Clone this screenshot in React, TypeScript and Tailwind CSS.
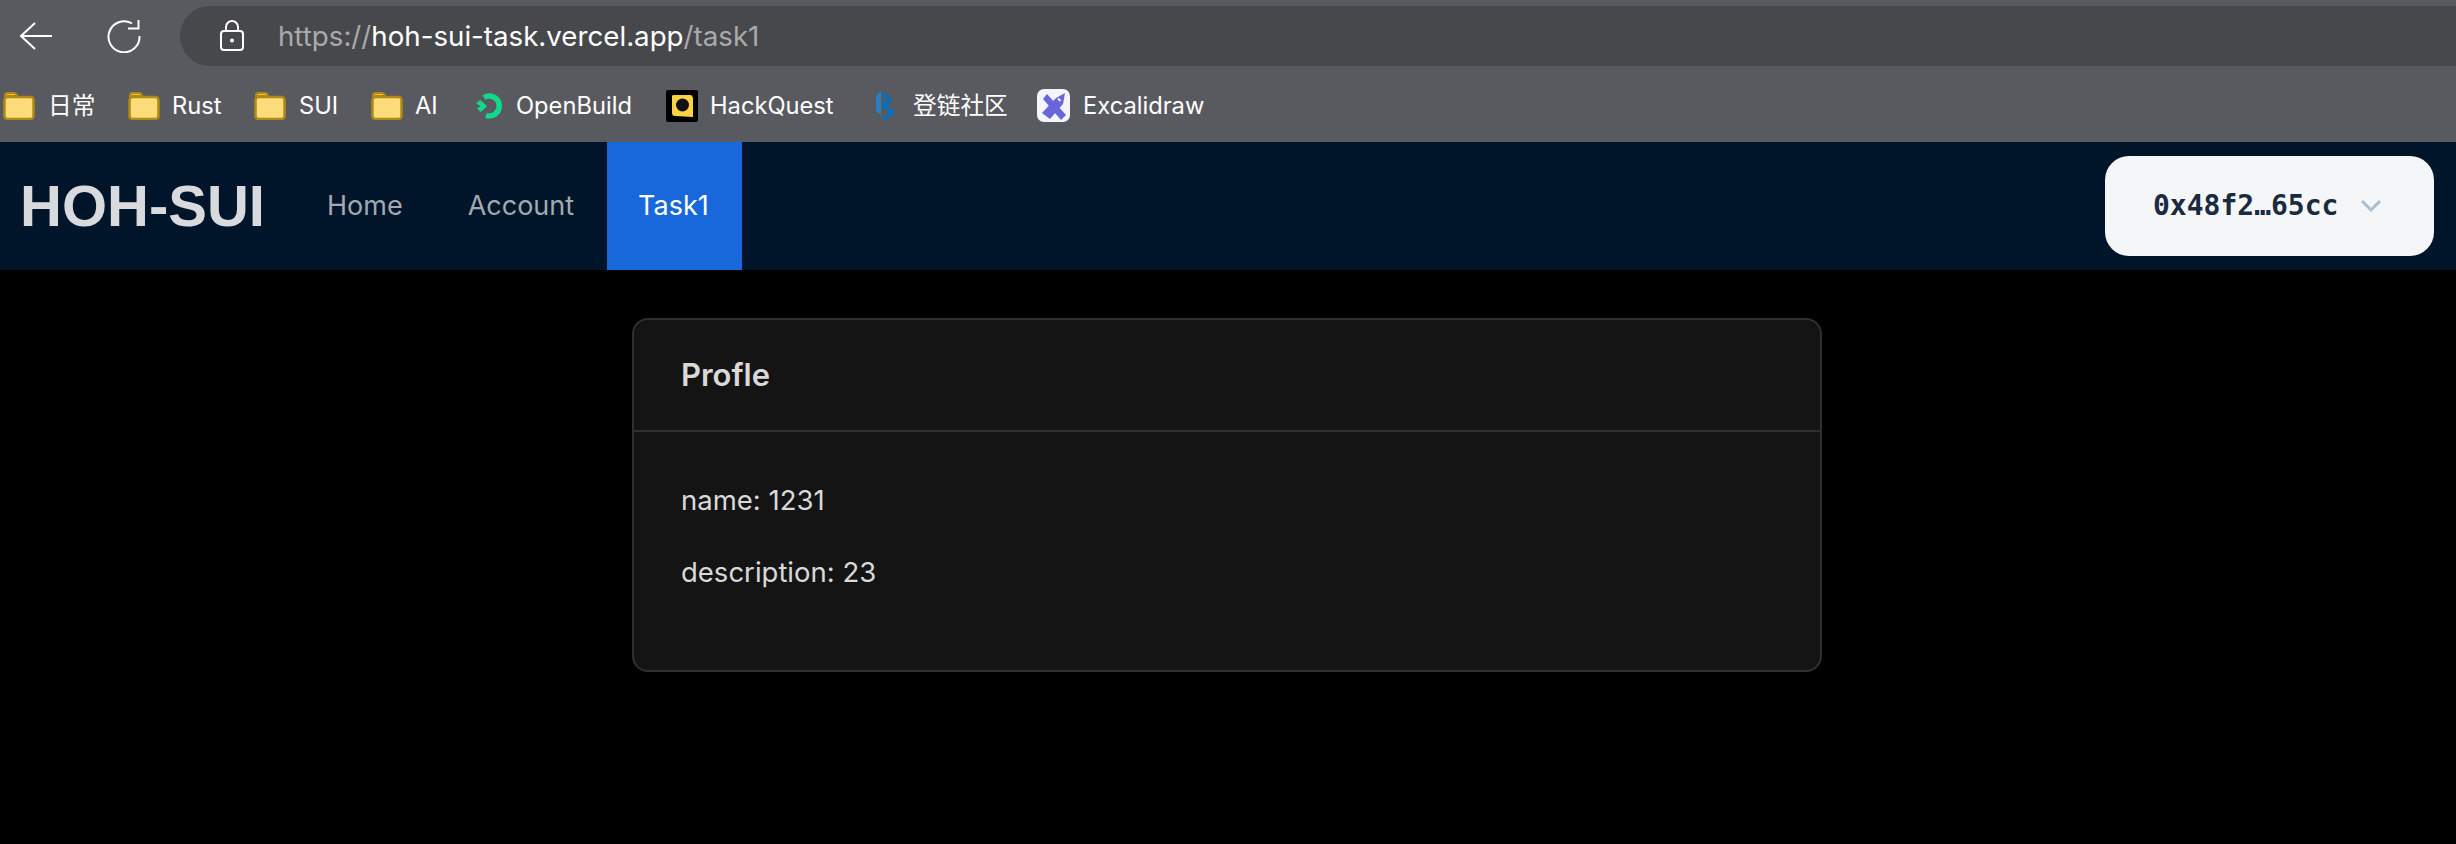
import React from "react";

const FolderIcon = () => (
  <svg width="32" height="28" viewBox="0 0 32 28" className="shrink-0">
    <path d="M2 6V3.500C2 2 3 1 4.500 1H11C12.500 1 13.500 2 14 4H4C3 4 2 5 2 6Z" fill="#f5c63c" stroke="#b08a14" strokeWidth="2" />
    <rect x="1.500" y="5" width="29" height="22" rx="3" fill="#fddc7c" stroke="#b08a14" strokeWidth="2.500" />
  </svg>
);

const OpenBuildIcon = () => (
  <svg width="28" height="28" viewBox="0 0 28 28" className="shrink-0">
    <path d="M9 5.500A10 10 0 1 1 11 23.500" fill="none" stroke="#12d98a" strokeWidth="5.500" />
    <path d="M1 11.500L5 8L7 9.500L12 14L6 20L2 16.500L5.500 14Z" fill="#12d98a" />
  </svg>
);

const HackQuestIcon = () => (
  <svg width="32" height="32" viewBox="0 0 32 32" className="shrink-0">
    <rect width="32" height="32" rx="2" fill="#000" />
    <path d="M7 5H24C26 5 27 7 27 9V27L9 26C7 26 6 25 6 23V6Z" fill="#fbd244" />
    <circle cx="16.500" cy="15" r="6.500" fill="#111" />
  </svg>
);

const DengLianIcon = () => (
  <svg width="22" height="32" viewBox="0 0 22 32" className="shrink-0">
    <path d="M2 6L7 1V25L2 21Z" fill="#2a7fc4" />
    <path d="M8 1L17 8V13L13 16L20 20V24L10 31L8 28L14 23V21L8 17V13L12 11V9L8 6Z" fill="#0f6db8" />
  </svg>
);

const ExcalidrawIcon = () => (
  <svg width="33" height="33" viewBox="0 0 33 33" className="shrink-0">
    <rect width="33" height="33" rx="7" fill="#f4f5fb" />
    <path d="M6 10L10 5L29 26L24 31Z" fill="#6965db" />
    <path d="M28 4L26 15L13 30L5 24L19 9Z" fill="#6965db" />
    <path d="M21 9.500L23.500 12" stroke="#f4f5fb" strokeWidth="2" />
  </svg>
);

const bookmarks = [
  { icon: <FolderIcon />, label: "日常", gap: "gap-[13px]", w: "w-[125px]" },
  { icon: <FolderIcon />, label: "Rust", gap: "gap-[12px]", w: "w-[126px]" },
  { icon: <FolderIcon />, label: "SUI", gap: "gap-[13px]", w: "w-[117px]" },
  { icon: <FolderIcon />, label: "AI", gap: "gap-[12px]", w: "w-[104px]" },
  { icon: <OpenBuildIcon />, label: "OpenBuild", gap: "gap-[13px]", w: "w-[191px]" },
  { icon: <HackQuestIcon />, label: "HackQuest", gap: "gap-[12px]", w: "w-[208px]" },
  { icon: <DengLianIcon />, label: "登链社区", gap: "gap-[17px]", w: "w-[163px]" },
  { icon: <ExcalidrawIcon />, label: "Excalidraw", gap: "gap-[13px]", w: "w-auto" },
];

const App = () => {
  return (
    <div className="min-h-[844px] bg-black font-['Inter',sans-serif]">
      {/** Browser chrome */}
      <div className="h-[142px] bg-[#595a5f]">
        <div className="flex h-[66px] items-end">
          <div className="flex h-[60px] w-[180px] shrink-0 items-center pl-[19px]">
            <svg width="34" height="30" viewBox="0 0 34 30" className="-mt-[1px]">
              <path d="M33 15H2M16 2L2 15L16 28" fill="none" stroke="#fff" strokeWidth="2" />
            </svg>
            <svg width="34" height="34" viewBox="0 0 34 34" className="ml-[54px]">
              <path d="M25 4.500A15.500 15.500 0 1 0 32.500 17" fill="none" stroke="#fff" strokeWidth="2" />
              <path d="M21 9.500H31.500V1" fill="none" stroke="#fff" strokeWidth="2" />
            </svg>
          </div>
          <div className="flex h-[60px] flex-1 items-center rounded-l-[30px] bg-[#47484c] pl-[39px]">
            <svg width="26" height="32" viewBox="0 0 26 32">
              <path d="M7 11V7A6 6 0 0 1 19 7V11" fill="none" stroke="#fff" strokeWidth="2" />
              <rect x="2" y="11" width="22" height="19" rx="3" fill="none" stroke="#fff" strokeWidth="2" />
              <circle cx="13" cy="20.500" r="2" fill="#fff" />
            </svg>
            <span className="ml-[33px] text-[27.700px] leading-[32px] text-[#a9aaac]">
              https://<span className="text-white">hoh-sui-task.vercel.app</span>/task1
            </span>
          </div>
        </div>
        <div className="flex h-[76px] items-center pt-[3px] pl-[3px]">
          {bookmarks.map((item) => (
            <div key={item.label} className={`flex items-center ${item.gap} ${item.w}`}>
              {item.icon}
              <span className="font-['Inter','Noto_Sans_CJK_SC',sans-serif] text-[23.700px] leading-[30px] text-white">
                {item.label}
              </span>
            </div>
          ))}
        </div>
      </div>

      {/** Navbar */}
      <div className="flex h-[128px] items-center bg-[#001529]">
        <h1 className="ml-[20px] w-[278px] shrink-0 font-['Liberation_Sans',sans-serif] text-[58px] font-bold leading-none text-[#d8dadd]">
          HOH-SUI
        </h1>
        <div className="flex h-full items-center pt-[1px] text-[27px] text-[#a3a9b0]">
          <span className="pr-[35px] pl-[29px]">Home</span>
          <span className="pr-[33px] pl-[30px]">Account</span>
          <span className="-mt-[1px] flex h-[128px] items-center bg-[#1868db] pr-[33px] pl-[31px] pt-[1px] text-white">Task1</span>
        </div>
        <button className="mr-[22px] ml-auto flex h-[100px] w-[329px] items-center rounded-[24px] bg-[#f5f6f8] pl-[48px] font-['DejaVu_Sans_Mono',monospace] text-[28px] font-bold text-[#1a2a3f]">
          0x48f2…65cc
          <svg width="22" height="14" viewBox="0 0 22 14" className="ml-[22px]">
            <path d="M2 2L11 11L20 2" fill="none" stroke="#a9bfce" strokeWidth="3" />
          </svg>
        </button>
      </div>

      {/** Card */}
      <div className="mx-auto mt-[48px] w-[1190px] -translate-x-[1px] rounded-[16px] border-2 border-[#303030] bg-[#141414] text-[#d9d9d9]">
        <div className="flex h-[112px] items-center border-b-2 border-[#303030] px-[47px] text-[31px] font-semibold">
          Profle
        </div>
        <div className="px-[47px] pt-[46px] pb-[48px] text-[27.500px] leading-[44px]">
          <p className="mb-[28px]">name: 1231</p>
          <p className="mb-[28px]">description: 23</p>
        </div>
      </div>
    </div>
  );
};

export default App;
